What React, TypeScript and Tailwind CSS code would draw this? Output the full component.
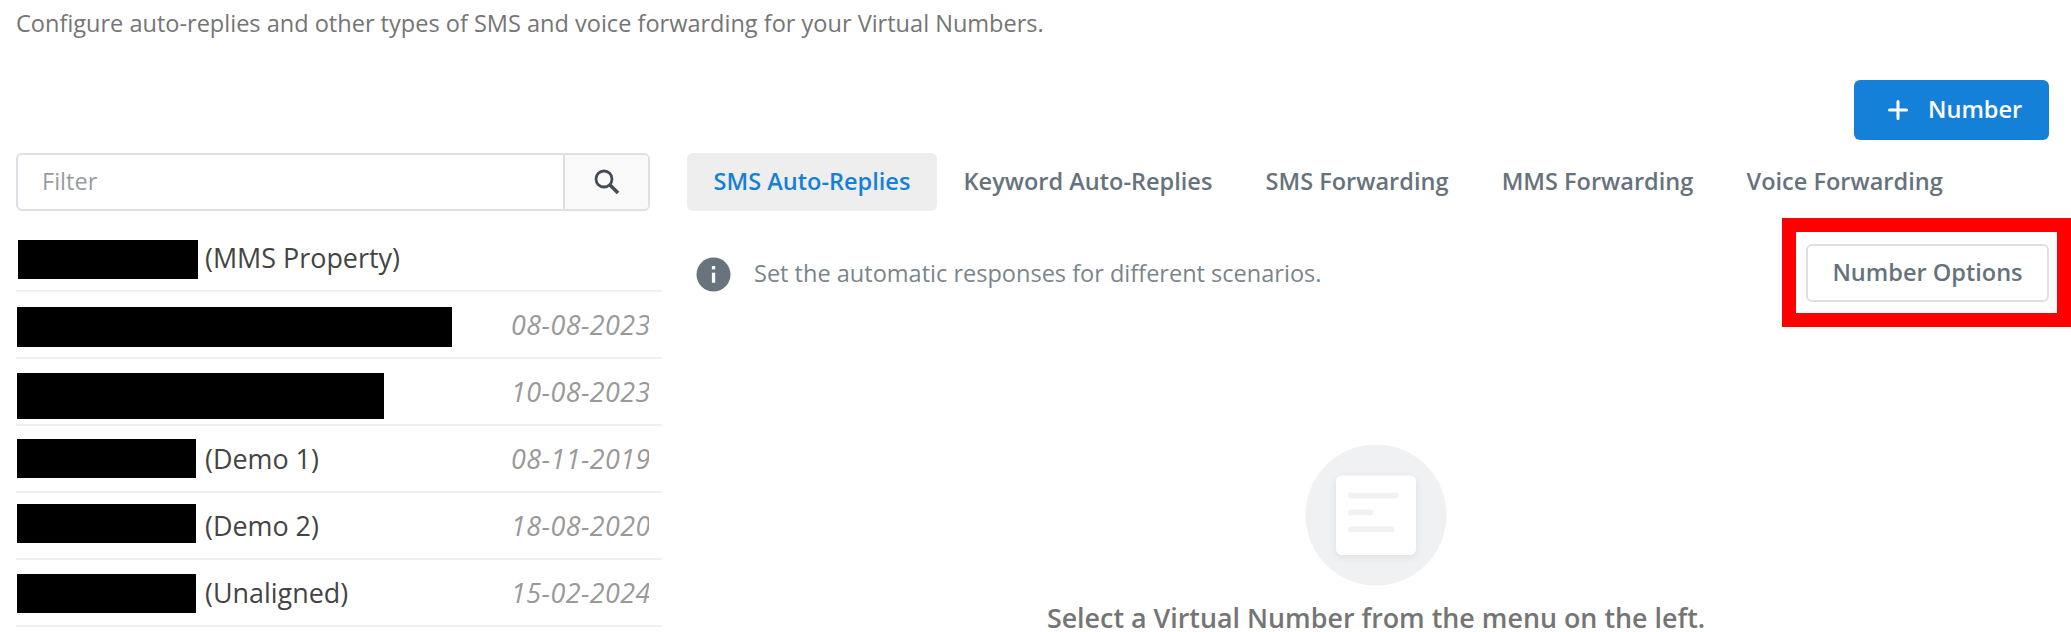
const rows = [
  { label: '(MMS Property)', date: '', mask: 'ml-[2px] mt-[15px] w-[180px] h-[39px]' },
  { label: '', date: '08-08-2023', mask: 'ml-px mt-[15px] w-[435px] h-[40px]' },
  { label: '', date: '10-08-2023', mask: 'ml-px mt-[14px] w-[367px] h-[46px]' },
  { label: '(Demo 1)', date: '08-11-2019', mask: 'ml-px mt-[13px] w-[179px] h-[39px]' },
  { label: '(Demo 2)', date: '18-08-2020', mask: 'ml-px mt-[11px] w-[179px] h-[39px]' },
  { label: '(Unaligned)', date: '15-02-2024', mask: 'ml-px mt-[14px] w-[179px] h-[39px]' },
];

const tabs = ['SMS Auto-Replies', 'Keyword Auto-Replies', 'SMS Forwarding', 'MMS Forwarding', 'Voice Forwarding'];

function NumberList() {
  return (
    <aside className="w-[646px] shrink-0">
      <div className="flex h-[58px] w-[634px] overflow-hidden rounded-[6px] border-2 border-[#dce0e5]">
        <div className="flex flex-1 items-center pl-[24px] text-[23.54px] text-[#999b9f]">Filter</div>
        <div className="flex w-[85px] items-center justify-center border-l-2 border-[#dce0e5] bg-[#f9f9f9]">
          <svg width="26" height="26" viewBox="0 0 26 26" fill="none" stroke="#454c55">
            <circle cx="10" cy="10" r="8" strokeWidth="2.8" />
            <path d="M16 16L24 24" strokeWidth="3.6" />
          </svg>
        </div>
      </div>
      <ul className="mt-[14px]">
        {rows.map((row, i) => (
          <li key={i} className="flex h-[67px] border-b-2 border-[#f0f0f0]">
            <div className="w-[189px] shrink-0">
              <div className={`bg-black ${row.mask}`} />
            </div>
            <div className="flex-1 pt-[15px] text-[26.9px] leading-[36px] whitespace-nowrap text-[#444]">{row.label}</div>
            <div className="mr-[13px] w-[138px] overflow-hidden pt-[15px] text-[26.9px] leading-[36px] tracking-[0.45px] whitespace-nowrap text-[#999] italic">
              {row.date}
            </div>
          </li>
        ))}
      </ul>
    </aside>
  );
}

function EmptyState() {
  return (
    <div className="mt-[117px] mr-[6px] flex flex-col items-center">
      <svg width="142" height="142" viewBox="0 0 142 142">
        <defs>
          <filter id="card-shadow" x="-20%" y="-20%" width="140%" height="140%">
            <feDropShadow dx="0" dy="2" stdDeviation="3" floodColor="#59626f" floodOpacity="0.13" />
          </filter>
        </defs>
        <circle cx="71" cy="71" r="70.5" fill="#f0f1f3" />
        <rect x="31" y="31.500" width="80" height="79.500" rx="6" fill="#fff" filter="url(#card-shadow)" />
        <g fill="#f0f1f2">
          <rect x="43" y="48.500" width="50.500" height="6" rx="3" />
          <rect x="43" y="65.500" width="25" height="6" rx="3" />
          <rect x="43" y="82.500" width="46.500" height="5.500" rx="2.700" />
        </g>
      </svg>
      <p className="mt-[14px] text-[26.85px] leading-[36px] font-semibold whitespace-nowrap text-[#757575]">
        Select a Virtual Number from the menu on the left.
      </p>
    </div>
  );
}

export default function App() {
  return (
    <div className="h-[632px] w-[2071px] overflow-hidden bg-white pl-4 font-['Open_Sans',sans-serif]">
      <p className="pt-[7px] text-[23.54px] leading-[32px] whitespace-nowrap text-[#757575]">
        Configure auto-replies and other types of SMS and voice forwarding for your Virtual Numbers.
      </p>
      <div className="mt-[41px] flex justify-end pr-[22px]">
        <button className="flex h-[60px] w-[195px] items-center rounded-[6px] bg-[#1580d8] pl-[34px] text-[23.54px] font-semibold text-white">
          <svg width="20" height="20" viewBox="0 0 20 20" stroke="currentColor" strokeWidth="3" strokeLinecap="round">
            <path d="M10 1.500V18.500M1.500 10H18.500" />
          </svg>
          <span className="ml-[20px]">Number</span>
        </button>
      </div>
      <div className="mt-[13px] flex">
        <NumberList />
        <main className="ml-[25px] flex-1">
          <nav className="flex h-[58px]">
            {tabs.map((tab, i) => (
              <a
                key={tab}
                className={`flex items-center rounded-[6px] px-[26.6px] text-[23.54px] font-semibold whitespace-nowrap ${
                  i === 0 ? 'bg-[#eeeeee] text-[#1580d8]' : 'text-[#66737d]'
                }`}
              >
                {tab}
              </a>
            ))}
          </nav>
          <div className="mt-[7px] flex h-[109px] items-center justify-between">
            <div className="flex items-center pt-[3px] pl-[9px] text-[23.54px] text-[#7a858d]">
              <svg width="35" height="35" viewBox="0 0 35 35">
                <circle cx="17.500" cy="17.500" r="17" fill="#67737d" />
                <rect x="15.900" y="9" width="3.300" height="3.400" fill="#fff" />
                <rect x="15.900" y="15.700" width="3.300" height="10" fill="#fff" />
              </svg>
              <span className="ml-[23px] whitespace-nowrap">Set the automatic responses for different scenarios.</span>
            </div>
            <div className="flex h-[109px] w-[289px] items-start border-[14px] border-[#ff0000] pt-[12px] pl-[10px]">
              <button className="h-[58px] w-[243px] shrink-0 rounded-[6px] border-2 border-[#dce0e5] text-[23.54px] font-semibold whitespace-nowrap text-[#66737d]">
                Number Options
              </button>
            </div>
          </div>
          <EmptyState />
        </main>
      </div>
    </div>
  );
}
